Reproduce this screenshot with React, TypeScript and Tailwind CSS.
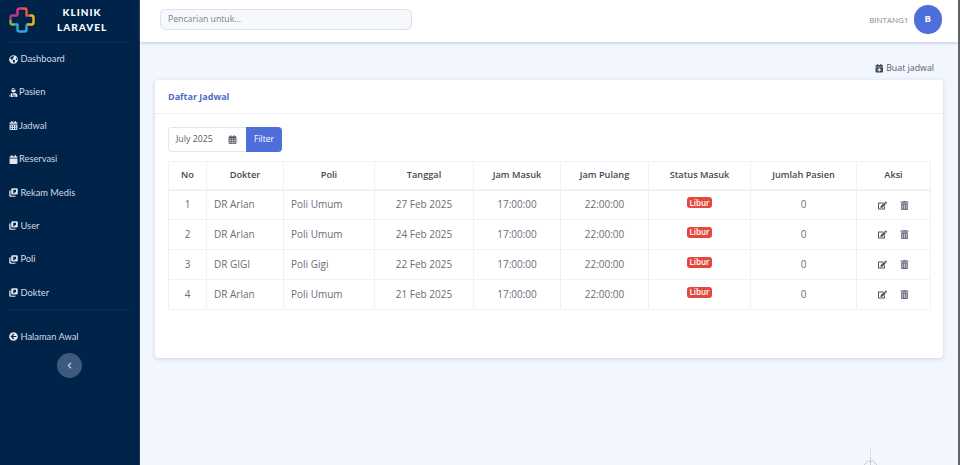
import { FaCalendarAlt, FaCalendar, FaCalendarPlus, FaEdit, FaTrashAlt, FaChevronLeft, FaGlobeAmericas, FaUserInjured, FaArrowCircleLeft } from "react-icons/fa";
import { FaRegCalendarDays } from "react-icons/fa6";
import { ReactNode } from "react";

function Logo() {
  return (
    <svg width="26" height="26" viewBox="0 0 26 26" fill="none" strokeWidth="2.4" strokeLinejoin="round">
      <path d="M8.5 8.5V3.5Q8.5 1.5 10.5 1.5H13" stroke="#e0357e" />
      <path d="M13 1.5H15.5Q17.5 1.5 17.5 3.5V8.5H21" stroke="#e8574a" />
      <path d="M21 8.5H22.5Q24.5 8.5 24.5 10.5V15.5Q24.5 17.5 22.5 17.5H17.5" stroke="#f0b429" />
      <path d="M17.5 17.5V22.5Q17.5 24.5 15.5 24.5H13" stroke="#3b9fe0" />
      <path d="M13 24.5H10.5Q8.5 24.5 8.5 22.5V17.5H5" stroke="#33a9c9" />
      <path d="M5 17.5H3.5Q1.5 17.5 1.5 15.5V13" stroke="#7bc043" />
      <path d="M1.5 13V10.5Q1.5 8.5 3.5 8.5H8.5" stroke="#b5358f" />
    </svg>
  );
}

function Stacked() {
  return (
    <svg width="9" height="9" viewBox="0 0 18 18">
      <rect x="4.5" y="0.5" width="13" height="12.5" rx="2.5" fill="#e3e8ee" />
      <path d="M8.5 3.5h5.5v3.5q0 2-2 2h-1.5v2h-2z" fill="#00234a" />
      <path d="M3 4.5H2.5Q0.5 4.5 0.5 6.5V15Q0.5 17.5 3 17.5H11.5Q13.5 17.5 13.5 15.5H5.5Q3 15.5 3 13z" fill="#e3e8ee" />
    </svg>
  );
}

function NavItem({ icon, label, gap }: { icon: ReactNode; label: string; gap: string }) {
  return (
    <div className="mt-[13.4px] flex h-[20px] items-center pl-[9px] font-['Lato',sans-serif] text-[9.3px] text-[#d3dae4] first:mt-[6px]">
      <span className="flex w-[9px] justify-center text-[9px] text-[#e3e8ee]">{icon}</span>
      <span className={gap}>{label}</span>
    </div>
  );
}

const rows = [
  ["1", "DR Arlan", "Poli Umum", "27 Feb 2025"],
  ["2", "DR Arlan", "Poli Umum", "24 Feb 2025"],
  ["3", "DR GIGI", "Poli Gigi", "22 Feb 2025"],
  ["4", "DR Arlan", "Poli Umum", "21 Feb 2025"],
];

const headers = ["No", "Dokter", "Poli", "Tanggal", "Jam Masuk", "Jam Pulang", "Status Masuk", "Jumlah Pasien", "Aksi"];

export default function App() {
  return (
    <div className="relative flex h-[465px] w-[960px] overflow-hidden bg-[#f2f6fe] font-['Open_Sans',sans-serif]">
      <aside className="flex w-[140px] shrink-0 flex-col border-r border-[#1d3a5f] bg-[#00234a]">
        <div className="mx-[9px] flex h-[43px] items-center gap-[22px] border-b border-[#0c2f55] pb-[2px]">
          <Logo />
          <div className="font-['Lato',sans-serif] text-center text-[10px] leading-[15px] font-black tracking-[1px] text-white">
            <div>KLINIK</div>
            <div>LARAVEL</div>
          </div>
        </div>
        <div className="flex flex-col">
          <NavItem gap="ml-[2.5px]" icon={<FaGlobeAmericas />} label="Dashboard" />
          <NavItem gap="ml-[1px]" icon={<FaUserInjured />} label="Pasien" />
          <NavItem gap="ml-[1px]" icon={<FaCalendarAlt />} label="Jadwal" />
          <NavItem gap="ml-[1px]" icon={<FaCalendar />} label="Reservasi" />
          <NavItem gap="ml-[2.5px]" icon={<Stacked />} label="Rekam Medis" />
          <NavItem gap="ml-[2.5px]" icon={<Stacked />} label="User" />
          <NavItem gap="ml-[2.5px]" icon={<Stacked />} label="Poli" />
          <NavItem gap="ml-[2.5px]" icon={<Stacked />} label="Dokter" />
        </div>
        <div className="mx-[9px] mt-[6px] border-t border-[#0c2f55]" />
        <div className="mt-[17px] flex h-[20px] items-center pl-[9px] font-['Lato',sans-serif] text-[9.3px] text-[#d3dae4]">
          <FaArrowCircleLeft className="text-[9px] text-[#e3e8ee]" />
          <span className="ml-[2.5px]">Halaman Awal</span>
        </div>
        <div className="mt-[6px] flex justify-center">
          <div className="flex h-[25px] w-[25px] items-center justify-center rounded-full bg-[#3b5a7d] text-[7px] text-[#c9d3de]">
            <FaChevronLeft />
          </div>
        </div>
      </aside>
      <main className="flex min-w-0 flex-1 flex-col border-r-2 border-[#5f646d]">
        <header className="flex h-[42px] shrink-0 items-center justify-between bg-white pr-[16px] pb-[3px] pl-[20px] shadow-[0_1px_3px_rgba(80,90,120,0.3)]">
          <div className="flex h-[21px] w-[252px] items-center rounded-[5px] border border-[#dde3ee] bg-[#f6f8fc] pl-[7px] text-[8.7px] text-[#7c8290]">
            Pencarian untuk...
          </div>
          <div className="flex items-center gap-[5px]">
            <span className="text-[8px] text-[#858a96]">BINTANG1</span>
            <div className="flex h-[28.5px] w-[28.5px] items-center justify-center rounded-full bg-[#4e6fdb] text-[9.5px] font-bold text-white">B</div>
          </div>
        </header>
        <div className="flex flex-col px-[15px]">
          <div className="mt-[20px] flex h-[13px] items-center justify-end gap-[3px] pr-[9px] text-[8.8px] text-[#5a5f6b]">
            <FaCalendarPlus className="text-[8.5px] text-[#3d4553]" />
            <span>Buat jadwal</span>
          </div>
          <section className="mt-[5px] h-[278px] rounded-[4px] bg-white shadow-[0_1px_4px_rgba(80,90,120,0.22)]">
            <div className="flex h-[34px] items-center border-b border-[#eef0f4] pl-[13px] text-[9px] font-bold text-[#4e6bc8]">
              Daftar Jadwal
            </div>
            <div className="px-[13px] pt-[13px]">
              <div className="flex h-[25px]">
                <div className="flex w-[78px] items-center justify-between rounded-l-[4px] border border-r-0 border-[#e1e5ec] pr-[9px] pl-[7px] text-[8.8px] text-[#555b66]">
                  <span>July 2025</span>
                  <FaRegCalendarDays className="text-[9px] text-[#555b66]" />
                </div>
                <div className="flex w-[36px] items-center justify-center rounded-r-[4px] bg-[#4e6fdb] text-[8.5px] text-white">Filter</div>
              </div>
              <table className="mt-[9px] w-[762px] table-fixed border-collapse border border-[#eef1f6] text-[10px] text-[#6a6e76]">
                <colgroup>
                  <col className="w-[38px]" />
                  <col className="w-[77px]" />
                  <col className="w-[91px]" />
                  <col className="w-[99px]" />
                  <col className="w-[87px]" />
                  <col className="w-[88px]" />
                  <col className="w-[102px]" />
                  <col className="w-[106px]" />
                  <col className="w-[74px]" />
                </colgroup>
                <thead>
                  <tr className="h-[28px] border-b-2 border-[#eef1f6]">
                    {headers.map((h) => (
                      <th key={h} className="border-x border-[#eef1f6] text-center text-[9.2px] font-semibold text-[#434955]">{h}</th>
                    ))}
                  </tr>
                </thead>
                <tbody>
                  {rows.map((r) => (
                    <tr key={r[0]} className="h-[30px] border-b border-[#eef1f6]">
                      <td className="border-x border-[#eef1f6] text-center">{r[0]}</td>
                      <td className="border-x border-[#eef1f6] pl-[7px]">{r[1]}</td>
                      <td className="border-x border-[#eef1f6] pl-[7px]">{r[2]}</td>
                      <td className="border-x border-[#eef1f6] text-center">{r[3]}</td>
                      <td className="border-x border-[#eef1f6] text-center">17:00:00</td>
                      <td className="border-x border-[#eef1f6] text-center">22:00:00</td>
                      <td className="border-x border-[#eef1f6] text-center align-top">
                        <span className="mt-[6.5px] inline-flex h-[11px] w-[25.5px] items-center justify-center rounded-[3px] bg-[#e2483d] text-[8px] leading-none font-semibold text-white">Libur</span>
                      </td>
                      <td className="border-x border-[#eef1f6] text-center">0</td>
                      <td className="border-x border-[#eef1f6]">
                        <div className="flex items-center justify-center gap-[13px] pt-[0.5px] text-[9px] text-[#4c5361]">
                          <FaEdit />
                          <FaTrashAlt className="text-[#6b7280]" />
                        </div>
                      </td>
                    </tr>
                  ))}
                </tbody>
              </table>
            </div>
          </section>
        </div>
      </main>
      <svg className="absolute top-[447px] left-[863px]" width="15" height="18" viewBox="0 0 15 18" fill="none" stroke="#c8ccd4" strokeWidth="1">
        <path d="M7.5 1V8" strokeDasharray="1.5 1.5" />
        <path d="M7.5 10V18" />
        <path d="M1 18L5.5 13.5L7.5 15L9.5 13.5L14 18" />
      </svg>
    </div>
  );
}
